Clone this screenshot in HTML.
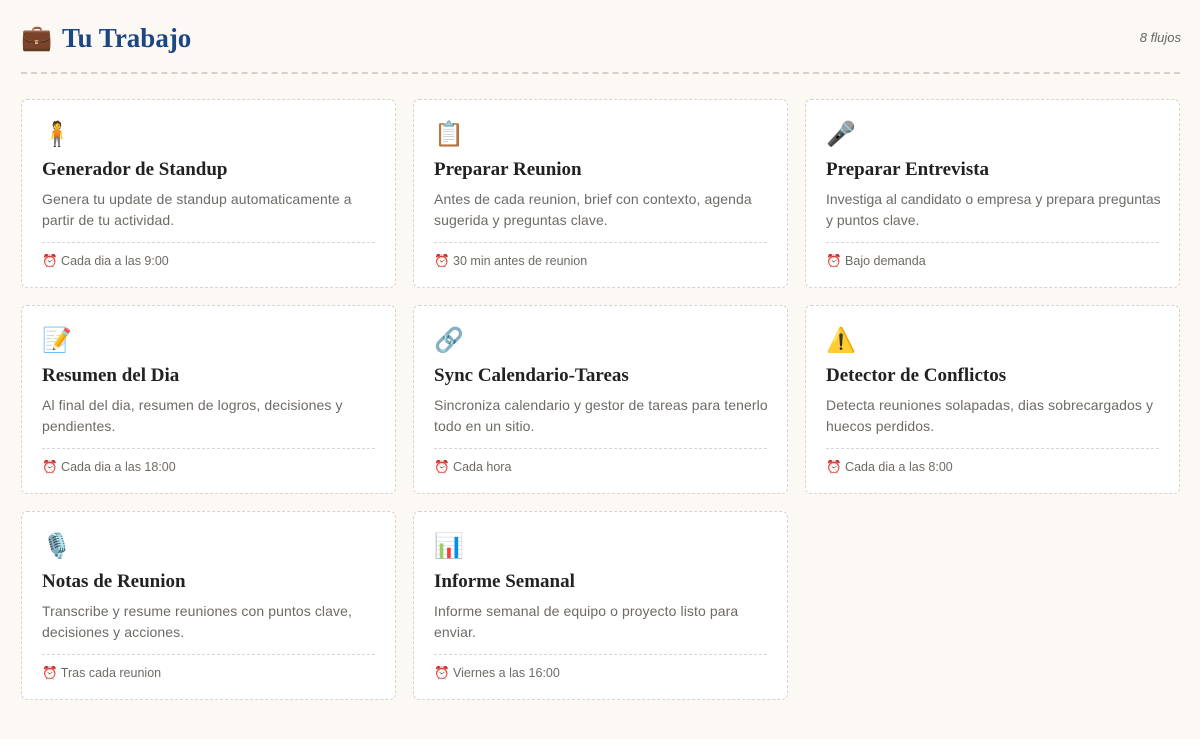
<!DOCTYPE html>
<html><head><meta charset="utf-8"><style>
*{box-sizing:border-box;margin:0;padding:0}
body{width:1200px;height:739px;background:#fcf9f5;font-family:"Liberation Sans",sans-serif;position:relative;overflow:hidden}
.hdr{position:absolute;left:21px;top:22px;display:flex;align-items:center}
.hdr .ic{font-size:25px;width:30px;line-height:32px}
.hdr h1{margin-left:11px;font-family:"Liberation Serif",serif;font-weight:bold;font-size:27px;color:#1d4683}
.cnt{position:absolute;right:19px;top:30px;font-style:italic;font-size:13px;color:#666;font-family:"Liberation Sans",sans-serif}
.rule{position:absolute;left:21px;right:20px;top:72px;border-top:2px dashed #d6d0ca}
.card{position:absolute;width:375px;height:189px;background:#fff;border:1px dashed #d6d3d0;border-radius:6px;padding:0 20px}
.card .e{position:absolute;left:20px;top:20px;font-size:24px;line-height:30px}
.card h2{position:absolute;left:20px;top:59px;font-family:"Liberation Serif",serif;font-weight:bold;font-size:19px;color:#222}
.card p{position:absolute;left:20px;right:18px;top:89px;font-size:14px;letter-spacing:0.1px;line-height:20.5px;color:#6e6a66}
.card .d{position:absolute;left:20px;right:20px;top:142px;border-top:1px dashed #d6d3d0}
.card .f{position:absolute;left:20px;top:154px;font-size:12.5px;color:#6e6a66}
</style></head><body>
<div class="hdr"><span class="ic">💼</span><h1>Tu Trabajo</h1></div>
<div class="cnt">8 flujos</div>
<div class="rule"></div>

<div class="card" style="left:21px;top:99px"><div class="e">🧍</div><h2>Generador de Standup</h2><p>Genera tu update de standup automaticamente a partir de tu actividad.</p><div class="d"></div><div class="f">⏰ Cada dia a las 9:00</div></div>
<div class="card" style="left:413px;top:99px"><div class="e">📋</div><h2>Preparar Reunion</h2><p>Antes de cada reunion, brief con contexto, agenda sugerida y preguntas clave.</p><div class="d"></div><div class="f">⏰ 30 min antes de reunion</div></div>
<div class="card" style="left:805px;top:99px"><div class="e">🎤</div><h2>Preparar Entrevista</h2><p style="letter-spacing:0;right:6px">Investiga al candidato o empresa y prepara preguntas<br>y puntos clave.</p><div class="d"></div><div class="f">⏰ Bajo demanda</div></div>

<div class="card" style="left:21px;top:305px"><div class="e">📝</div><h2>Resumen del Dia</h2><p>Al final del dia, resumen de logros, decisiones y pendientes.</p><div class="d"></div><div class="f">⏰ Cada dia a las 18:00</div></div>
<div class="card" style="left:413px;top:305px"><div class="e">🔗</div><h2>Sync Calendario-Tareas</h2><p>Sincroniza calendario y gestor de tareas para tenerlo todo en un sitio.</p><div class="d"></div><div class="f">⏰ Cada hora</div></div>
<div class="card" style="left:805px;top:305px"><div class="e">⚠️</div><h2>Detector de Conflictos</h2><p>Detecta reuniones solapadas, dias sobrecargados y huecos perdidos.</p><div class="d"></div><div class="f">⏰ Cada dia a las 8:00</div></div>

<div class="card" style="left:21px;top:511px"><div class="e">🎙️</div><h2>Notas de Reunion</h2><p>Transcribe y resume reuniones con puntos clave, decisiones y acciones.</p><div class="d"></div><div class="f">⏰ Tras cada reunion</div></div>
<div class="card" style="left:413px;top:511px"><div class="e">📊</div><h2>Informe Semanal</h2><p>Informe semanal de equipo o proyecto listo para enviar.</p><div class="d"></div><div class="f">⏰ Viernes a las 16:00</div></div>
</body></html>
